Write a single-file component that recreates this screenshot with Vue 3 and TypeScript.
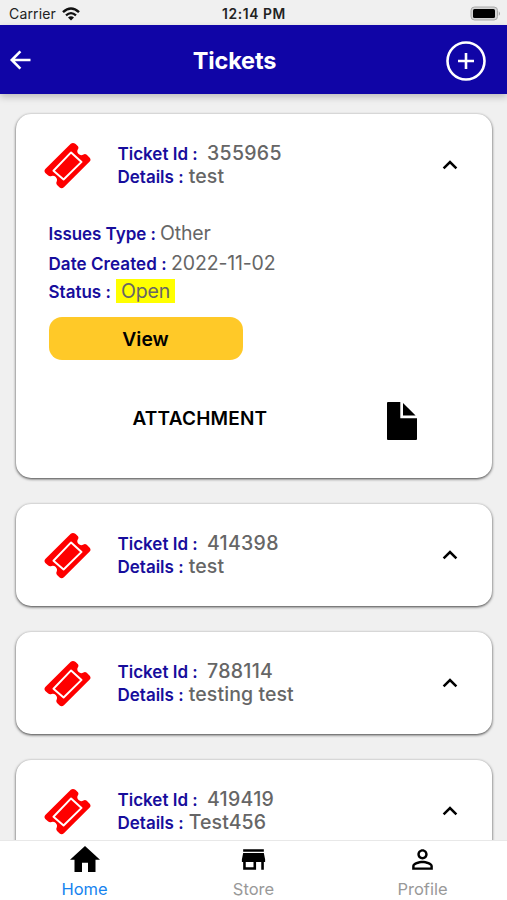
<script setup lang="ts">
import { ref } from 'vue'

interface Ticket {
  id: string
  details: string
  issueType?: string
  created?: string
  status?: string
}

const tickets = ref<Ticket[]>([
  { id: '355965', details: 'test', issueType: 'Other', created: '2022-11-02', status: 'Open' },
  { id: '414398', details: 'test' },
  { id: '788114', details: 'testing test' },
  { id: '419419', details: 'Test456' },
])
</script>

<template>
  <div class="screen">
    <div class="status-bar">
      <div class="carrier">
        <span>Carrier</span>
        <svg class="wifi" viewBox="0 0 18 14" fill="none" stroke="#111">
          <path d="M1 5.2Q9-2.2 17 5.2" stroke-width="2.5" />
          <path d="M4 8.3Q9 3.9 14 8.3" stroke-width="2.3" />
          <path d="M9 13.4 6 10.4Q9 8 12 10.4Z" fill="#111" stroke="none" />
        </svg>
      </div>
      <span class="clock">12:14 PM</span>
      <svg class="battery" viewBox="0 0 31 15">
        <rect x="1" y="1" width="26.5" height="13" rx="3.5" fill="#d4d4d4" stroke="#aaa" />
        <rect x="3" y="3" width="22" height="9" rx="1.5" fill="#000" />
        <path d="M28.8 5.2Q31 7.5 28.8 9.8Z" fill="#999" />
      </svg>
    </div>

    <header class="header">
      <button class="icon-button" aria-label="Back">
        <svg class="back" viewBox="0 0 22 20" fill="none" stroke="#fff" stroke-width="2.6">
          <path d="M21.5 10H2.8M11.4 1.4 2.8 10 11.4 18.6" />
        </svg>
      </button>
      <h1>Tickets</h1>
      <button class="icon-button" aria-label="Add ticket">
        <svg class="add" viewBox="0 0 40 40" fill="none" stroke="#fff" stroke-width="2.6">
          <circle cx="20" cy="20" r="18.5" />
          <path d="M20 12v16M12 20h16" />
        </svg>
      </button>
    </header>

    <main class="list">
      <article v-for="ticket in tickets" :key="ticket.id" class="card">
        <div class="summary">
          <svg class="ticket-icon" viewBox="0 0 144 144">
            <path
              fill="#fe0000"
              d="M4 83 82 5Q89 0 97 6L104 13Q107 17 104 22Q99 30 106 37Q113 43 121 38Q126 35 131 39L140 48Q145 54 140 60L61 139Q54 145 47 139L40 132Q36 127 39 121Q42 113 36 107Q30 102 23 104Q17 106 12 102L4 95Q-1 89 4 83Z"
            />
            <path d="M29 88 83 32 115 61 60 115Z" fill="none" stroke="#fff" stroke-width="6" stroke-linejoin="round" />
          </svg>
          <div class="heading">
            <p><span class="label id-label">Ticket Id :</span><span class="value id-value">{{ ticket.id }}</span></p>
            <p><span class="label details-label">Details :</span><span class="value">{{ ticket.details }}</span></p>
          </div>
          <svg class="chevron" viewBox="0 0 16 10" fill="none" stroke="#000" stroke-width="2.5">
            <path d="M1.6 8.4 8 2 14.4 8.4" />
          </svg>
        </div>
        <div v-if="ticket.status" class="body">
          <p><span class="label type-label">Issues Type :</span><span class="value light">{{ ticket.issueType }}</span></p>
          <p><span class="label date-label">Date Created :</span><span class="value light">{{ ticket.created }}</span></p>
          <p><span class="label status-label">Status :</span><span class="value light badge">{{ ticket.status }}</span></p>
          <button class="view">View</button>
          <div class="attachment">
            <span class="attachment-label">ATTACHMENT</span>
            <svg class="file" viewBox="0 0 30 38">
              <path d="M1 0H13.3V16.3H30V37Q30 38 29 38H1Q0 38 0 37V1Q0 0 1 0Z" />
              <path d="M16 1V13.6H28.6Z" />
            </svg>
          </div>
        </div>
      </article>
    </main>

    <nav class="tabs">
      <a class="tab active">
        <svg class="home" viewBox="2 3 20 17" preserveAspectRatio="none"><path d="M10 20v-6h4v6h5v-8h3L12 3 2 12h3v8z" /></svg>
        <span>Home</span>
      </a>
      <a class="tab">
        <svg class="glyph" viewBox="0 0 24 24"><path d="M20 4H4v2h16V4zm1 10v-2l-1-5H4l-1 5v2h1v6h10v-6h4v6h2v-6h1zm-9 4H6v-4h6v4z" /></svg>
        <span>Store</span>
      </a>
      <a class="tab">
        <svg class="glyph" viewBox="0 0 24 24"><path d="M12 5.9c1.16 0 2.1.94 2.1 2.1s-.94 2.1-2.1 2.1S9.9 9.16 9.9 8s.94-2.1 2.1-2.1m0 9c2.97 0 6.1 1.46 6.1 2.1v1.1H5.9V17c0-.64 3.13-2.1 6.1-2.1M12 4C9.79 4 8 5.79 8 8s1.79 4 4 4 4-1.79 4-4-1.79-4-4-4zm0 9c-2.67 0-8 1.34-8 4v3h16v-3c0-2.66-5.33-4-8-4z" /></svg>
        <span>Profile</span>
      </a>
    </nav>
  </div>
</template>

<style>
body {
  margin: 0;
}
</style>

<style scoped>
.screen {
  width: 507px;
  height: 900px;
  display: flex;
  flex-direction: column;
  overflow: hidden;
  background: #f0f0f0;
  font-family: Inter, 'Liberation Sans', sans-serif;
}
.screen p,
.screen h1 {
  margin: 0;
}
button {
  border: 0;
  padding: 0;
  background: none;
  font-family: inherit;
}
svg {
  display: block;
  flex: none;
}
.status-bar {
  flex: none;
  height: 25px;
  display: grid;
  grid-template-columns: 1fr auto 1fr;
  align-items: center;
  padding: 2px 6px 0 9px;
  box-sizing: border-box;
  font-size: 14px;
  color: #222;
}
.carrier {
  display: flex;
  align-items: center;
  gap: 6px;
  letter-spacing: 0.15px;
}
.wifi {
  width: 18px;
  height: 14px;
}
.clock {
  font-size: 13.8px;
  font-weight: 600;
  letter-spacing: 0.6px;
  margin-right: 2px;
}
.battery {
  width: 31px;
  height: 15px;
  justify-self: end;
  margin-top: -1px;
}
.header {
  flex: none;
  height: 69px;
  display: flex;
  align-items: center;
  justify-content: space-between;
  padding: 0 21px 0 9px;
  background: #1005a6;
  box-shadow: 0 3px 7px rgba(0, 0, 0, 0.22);
  z-index: 1;
}
.header h1 {
  padding-right: 8px;
  margin-top: 1px;
  font-size: 23.5px;
  font-weight: 700;
  letter-spacing: -0.15px;
  color: #fff;
}
.back {
  width: 22px;
  height: 20px;
}
.add {
  width: 40px;
  height: 40px;
  margin-top: 3px;
}
.list {
  flex: 1;
  min-height: 0;
  overflow: hidden;
  display: flex;
  flex-direction: column;
  gap: 26px;
  padding: 20px 15px 0 16px;
}
.card {
  flex: none;
  border-radius: 15px;
  background: #fff;
  box-shadow: 0 1px 3px rgba(0, 0, 0, 0.75);
}
.summary {
  height: 102px;
  display: flex;
  align-items: center;
  padding: 0 34px 0 28px;
}
.ticket-icon {
  width: 47px;
  height: 47px;
}
.heading {
  flex: 1;
  padding-left: 26.5px;
}
.heading p {
  height: 23.5px;
  line-height: 23.5px;
  white-space: nowrap;
}
.label {
  display: inline-block;
  font-size: 17px;
  font-weight: 600;
  color: #170d9c;
}
.id-label {
  width: 89.5px;
}
.details-label {
  width: 71.3px;
}
.value {
  font-size: 19.5px;
  font-weight: 500;
  letter-spacing: 0.08px;
  color: #666;
}
.id-value {
  letter-spacing: 0.3px;
}
.value.light {
  font-weight: 400;
  letter-spacing: -0.15px;
}
.chevron {
  width: 16px;
  height: 10px;
}
.body {
  height: 262px;
  box-sizing: border-box;
  padding: 2px 33px 0 32.5px;
}
.body p {
  height: 29.7px;
  line-height: 30px;
  white-space: nowrap;
}
.type-label {
  width: 111.5px;
  letter-spacing: -0.05px;
}
.date-label {
  width: 122.5px;
  letter-spacing: 0.06px;
}
.status-label {
  width: 67.5px;
}
.badge {
  display: inline-block;
  height: 24px;
  line-height: 24px;
  padding: 0 5px;
  background: #ff0;
}
.view {
  display: block;
  width: 194px;
  height: 43px;
  margin-top: 10px;
  border-radius: 13px;
  background: #ffc928;
  color: #000;
  font-size: 19.3px;
  font-weight: 600;
}
.attachment {
  display: flex;
  align-items: center;
  justify-content: space-between;
  padding: 42px 42px 0 84px;
  font-size: 19px;
  font-weight: 600;
}
.attachment-label {
  letter-spacing: 0.2px;
  padding-bottom: 5px;
}
.file {
  width: 30px;
  height: 38px;
}
.tabs {
  flex: none;
  height: 60px;
  box-sizing: border-box;
  border-top: 1px solid #e8e8e8;
  display: grid;
  grid-template-columns: repeat(3, 1fr);
  background: #fff;
  z-index: 1;
}
.tab {
  display: flex;
  flex-direction: column;
  align-items: center;
  justify-content: space-between;
  padding: 5px 0 1px;
  font-size: 16.5px;
  line-height: 20px;
  color: #999;
}
.tab.active {
  color: #1683ef;
}
.home {
  width: 30px;
  height: 26px;
}
.glyph {
  width: 31px;
  height: 31px;
  margin-top: -2px;
}
</style>
